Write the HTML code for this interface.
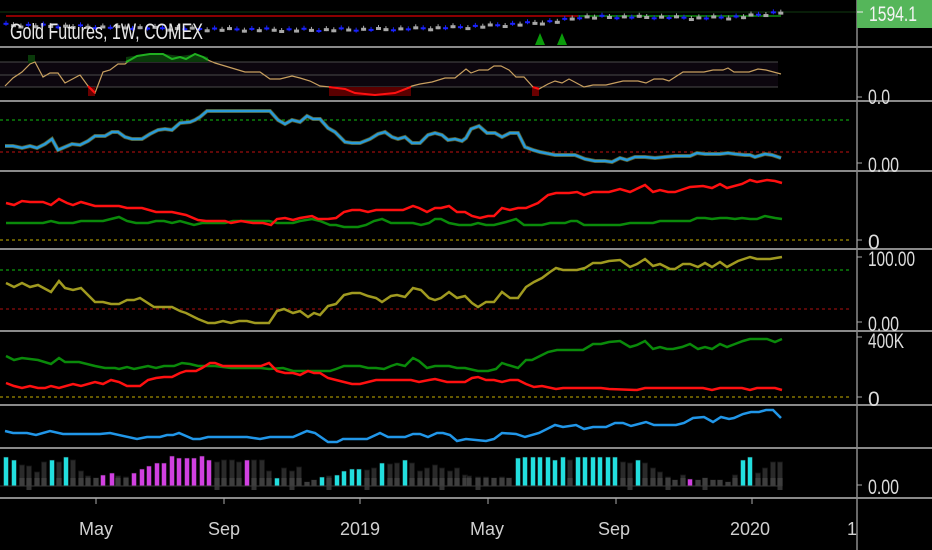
<!DOCTYPE html>
<html><head><meta charset="utf-8"><style>
html,body{margin:0;padding:0;background:#000;width:932px;height:550px;overflow:hidden}
svg{display:block}
text{font-family:"Liberation Sans",sans-serif}
</style></head><body>
<svg id="s" width="932" height="550" viewBox="0 0 932 550" xmlns="http://www.w3.org/2000/svg">
<rect width="932" height="550" fill="#000"/>
<!-- panel 1 -->
<line x1="0" y1="12" x2="857" y2="12" stroke="#0f3a0f" stroke-width="1"/>
<line x1="6" y1="16" x2="578" y2="16" stroke="#8a0000" stroke-width="2"/>
<line x1="578" y1="16" x2="781" y2="16" stroke="#0a6a0a" stroke-width="2"/>
<g id="candles"></g>
<polygon points="535,45 540,33 545,45" fill="#0a9a0a"/>
<polygon points="557,45 562,33 567,45" fill="#0a9a0a"/>
<text x="10" y="39" font-size="22" fill="#e8e8e8" textLength="193" lengthAdjust="spacingAndGlyphs">Gold Futures, 1W, COMEX</text>
<!-- panel 2 -->
<rect x="0" y="62" width="778" height="25" fill="#0c060e"/>
<line x1="0" y1="62" x2="778" y2="62" stroke="#4a4a4a"/>
<line x1="0" y1="75" x2="778" y2="75" stroke="#4a4a4a"/>
<line x1="0" y1="87" x2="778" y2="87" stroke="#4a4a4a"/>
<rect x="28" y="55" width="7" height="8" fill="#0a3a0a"/>
<polygon points="126,62 126,57 140,55 165,54 180,56 195,54 208,57 208,62" fill="#0a3a0a"/>
<rect x="88" y="87" width="7" height="9" fill="#6a0000"/>
<rect x="329" y="87" width="82" height="9" fill="#5a0000"/>
<rect x="532" y="87" width="7" height="9" fill="#6a0000"/>
<polyline fill="none" stroke="#c8a060" stroke-width="1.2" points="5,86 13,78 22,72 30,64 35,62 43,77 50,73 58,73 65,83 80,75 88,86 95,93 103,72 110,70 118,64 125,64 130,60 137,56 150,54 163,54 172,59 180,57 186,59 195,54 203,57 208,60 215,63 245,72 260,72 270,79 280,79 292,76 300,78 310,81 320,86 330,87 345,89 355,93 375,95 395,93 412,86 420,84 432,82 445,78 455,78 466,69 471,73 479,70 488,70 494,66 501,66 509,70 516,77 524,77 533,87 539,89 548,84 555,81 562,83 569,79 584,87 593,85 606,85 623,81 638,81 646,83 654,79 663,79 669,81 683,72 704,72 713,70 723,70 728,68 734,72 749,72 758,69 766,70 781,74"/>
<polyline fill="none" stroke="#20b020" stroke-width="2" points="126,62 130,60 137,56 150,54 163,54 172,59 180,57 186,59 195,54 203,57 208,60"/>
<polyline fill="none" stroke="#ff1010" stroke-width="2" points="88,86 95,93"/>
<polyline fill="none" stroke="#ff1010" stroke-width="2" points="329,87 345,89 355,93 375,95 395,93 411,87"/>
<polyline fill="none" stroke="#ff1010" stroke-width="2" points="533,87 539,89"/>
<!-- panel 3 -->
<line x1="0" y1="120" x2="850" y2="120" stroke="#10c010" stroke-dasharray="3,3"/>
<line x1="0" y1="152" x2="850" y2="152" stroke="#c01010" stroke-dasharray="3,3"/>
<polyline fill="none" stroke="#5a5a20" stroke-width="4" points="5,146 13,146 22,148 30,146 37,148 45,144 52,139 58,150 65,147 72,144 80,145 88,141 95,136 105,136 112,132 118,132 125,137 132,139 142,139 150,134 158,130 165,129 172,130 180,123 190,122 195,120 200,117 207,111 270,111 278,120 285,124 292,120 300,122 307,116 313,119 320,119 328,128 335,132 345,142 352,143 360,143 370,139 378,134 385,132 392,137 398,139 405,137 412,143 420,143 428,135 435,133 442,135 448,140 455,139 462,141 466,138 471,129 479,126 487,133 495,133 502,137 510,133 518,133 525,147 533,150 540,152 555,155 575,155 585,159 595,161 605,161 612,162 620,158 627,160 635,157 645,157 655,158 665,157 675,156 690,156 697,153 705,154 720,154 728,153 735,154 745,155 750,155 755,157 765,154 772,155 781,158"/>
<polyline fill="none" stroke="#2a9ad8" stroke-width="2.5" points="5,146 13,146 22,148 30,146 37,148 45,144 52,139 58,150 65,147 72,144 80,145 88,141 95,136 105,136 112,132 118,132 125,137 132,139 142,139 150,134 158,130 165,129 172,130 180,123 190,122 195,120 200,117 207,111 270,111 278,120 285,124 292,120 300,122 307,116 313,119 320,119 328,128 335,132 345,142 352,143 360,143 370,139 378,134 385,132 392,137 398,139 405,137 412,143 420,143 428,135 435,133 442,135 448,140 455,139 462,141 466,138 471,129 479,126 487,133 495,133 502,137 510,133 518,133 525,147 533,150 540,152 555,155 575,155 585,159 595,161 605,161 612,162 620,158 627,160 635,157 645,157 655,158 665,157 675,156 690,156 697,153 705,154 720,154 728,153 735,154 745,155 750,155 755,157 765,154 772,155 781,158"/>
<!-- panel 4 -->
<line x1="0" y1="240" x2="850" y2="240" stroke="#c8b000" stroke-dasharray="3,3"/>
<polyline fill="none" stroke="#0a8a0a" stroke-width="2.5" points="6,223 43,223 51,221 59,223 73,223 81,221 103,221 119,217 127,221 136,223 148,223 156,221 164,221 172,223 180,221 194,225 202,223 225,223 233,221 269,221 277,223 293,223 300,221 312,219 320,221 330,225 336,225 344,227 358,227 366,225 374,221 382,219 391,223 413,223 421,225 429,223 435,219 441,219 449,223 459,225 471,225 478,223 486,225 494,225 506,222 516,219 524,225 542,225 550,223 565,223 571,221 577,221 584,225 620,225 630,223 653,223 660,221 690,221 697,218 705,218 712,219 720,218 727,218 735,219 742,218 750,219 757,219 765,216 775,218 782,219"/>
<polyline fill="none" stroke="#ff1010" stroke-width="2.5" points="6,203 14,205 22,201 30,202 43,202 51,205 59,199 67,203 73,205 81,202 95,206 119,206 127,208 142,208 156,212 172,212 186,215 198,220 206,221 225,221 231,223 241,221 253,223 263,223 271,225 277,219 285,218 293,220 300,218 312,216 318,219 328,219 336,218 344,212 352,210 360,210 368,212 376,210 403,210 413,206 419,208 427,212 435,208 441,208 449,206 457,212 465,212 472,216 480,218 488,216 494,216 502,208 510,210 518,208 526,208 538,203 548,195 556,193 569,193 577,192 584,195 593,192 609,192 620,189 630,192 645,185 653,192 660,190 668,192 675,192 690,187 703,186 712,188 720,184 727,188 742,184 750,180 757,182 767,180 775,181 782,183"/>
<!-- panel 5 -->
<line x1="0" y1="270" x2="850" y2="270" stroke="#10c010" stroke-dasharray="3,3"/>
<line x1="0" y1="309" x2="850" y2="309" stroke="#b01010" stroke-dasharray="3,3"/>
<polyline fill="none" stroke="#a09a20" stroke-width="2.5" points="6,283 14,287 22,283 30,287 38,285 51,292 59,281 65,288 73,290 81,288 95,302 103,302 111,304 119,304 127,300 134,300 140,298 154,307 172,307 180,311 186,313 198,319 208,323 215,323 223,321 231,323 239,321 247,321 255,323 269,323 277,311 284,309 293,313 300,311 308,317 314,313 320,315 328,306 336,304 344,295 352,293 360,293 368,296 376,298 382,302 391,296 397,295 405,297 413,288 421,290 429,298 435,300 441,298 449,292 457,298 465,296 472,303 478,307 486,302 494,302 502,292 510,298 518,298 526,287 534,282 542,278 550,272 556,268 563,270 577,270 585,268 593,263 601,263 609,261 620,260 630,267 637,264 645,259 653,266 660,264 670,269 675,269 683,264 690,264 698,267 705,263 712,267 720,262 727,267 738,261 750,257 757,259 770,259 782,257"/>
<!-- panel 6 -->
<line x1="0" y1="397" x2="850" y2="397" stroke="#c8b000" stroke-dasharray="3,3"/>
<polyline fill="none" stroke="#0a8a0a" stroke-width="2.5" points="6,356 14,360 22,358 38,360 51,364 59,358 65,362 79,362 95,366 105,368 115,368 119,369 127,367 134,369 148,366 156,368 164,366 174,366 182,363 190,364 198,366 215,366 231,368 261,368 269,369 283,368 293,371 330,371 336,369 344,366 360,366 368,368 376,368 384,369 391,366 397,364 405,366 413,358 419,361 427,368 435,366 449,366 457,368 465,368 478,371 488,371 496,369 502,363 508,365 518,368 526,360 532,360 540,356 548,352 557,350 583,350 593,344 601,344 609,342 620,341 630,347 637,345 645,341 653,349 660,347 667,349 673,349 682,347 690,344 698,349 705,347 712,349 720,344 727,347 735,344 743,341 750,339 767,339 775,342 782,339"/>
<polyline fill="none" stroke="#ff1010" stroke-width="2.5" points="6,383 14,386 22,388 30,386 38,388 45,388 51,386 59,388 73,384 81,386 95,382 103,384 111,380 119,382 127,386 140,386 148,380 156,378 164,377 172,377 180,373 186,371 196,371 202,368 210,363 215,363 223,366 261,366 269,363 277,371 285,373 293,373 300,375 308,371 314,373 320,373 328,378 336,380 344,382 352,384 360,384 368,382 376,380 411,380 419,382 429,380 435,379 447,382 465,382 472,378 478,377 486,380 494,380 502,382 510,380 518,380 526,384 534,387 542,386 556,389 563,388 601,388 609,389 637,390 645,388 703,388 712,390 720,388 742,388 750,390 757,388 775,388 782,390"/>
<!-- panel 7 -->
<polyline fill="none" stroke="#2196e8" stroke-width="2.5" points="5,431 13,433 27,433 36,435 50,431 63,434 100,434 110,433 137,439 147,437 160,437 167,435 173,435 179,433 193,439 200,439 208,437 247,437 260,439 270,437 293,437 307,431 315,433 328,442 337,442 343,439 367,439 380,433 388,437 405,437 413,434 420,434 428,437 437,433 443,433 450,435 457,441 466,439 486,441 494,439 502,433 516,434 525,437 539,433 555,425 563,427 576,425 584,429 593,427 606,427 615,423 623,423 631,426 646,422 654,425 676,425 684,423 693,418 704,417 713,422 721,417 729,419 734,418 743,414 751,412 759,412 766,410 773,410 781,418"/>
<!-- panel 8 -->
<g id="hist"></g>
<line x1="0" y1="486" x2="782" y2="486" stroke="#3a3a3a" stroke-width="1"/>
<!-- dividers -->
<g stroke="#8a8a8a" stroke-width="2">
<line x1="0" y1="47" x2="932" y2="47"/>
<line x1="0" y1="101" x2="932" y2="101"/>
<line x1="0" y1="171" x2="932" y2="171"/>
<line x1="0" y1="249" x2="932" y2="249"/>
<line x1="0" y1="331" x2="932" y2="331"/>
<line x1="0" y1="405" x2="932" y2="405"/>
<line x1="0" y1="448" x2="932" y2="448"/>
<line x1="0" y1="498" x2="932" y2="498"/>
</g>
<line x1="857" y1="0" x2="857" y2="550" stroke="#8a8a8a" stroke-width="1.5"/>
<!-- price box -->
<rect x="857" y="0" width="75" height="28" fill="#55b65a"/>
<line x1="857" y1="12" x2="863" y2="12" stroke="#eee"/>
<text x="869" y="21" font-size="21" fill="#f4f4f4" textLength="48" lengthAdjust="spacingAndGlyphs">1594.1</text>
<!-- axis labels -->
<g fill="#dcdcdc" font-size="21">
<text x="868" y="104" textLength="22" lengthAdjust="spacingAndGlyphs">0.0</text>
<text x="868" y="172" textLength="31" lengthAdjust="spacingAndGlyphs">0.00</text>
<text x="868" y="249">0</text>
<text x="868" y="266" textLength="47" lengthAdjust="spacingAndGlyphs">100.00</text>
<text x="868" y="331" textLength="31" lengthAdjust="spacingAndGlyphs">0.00</text>
<text x="868" y="348" textLength="36" lengthAdjust="spacingAndGlyphs">400K</text>
<text x="868" y="406">0</text>
<text x="868" y="494" textLength="31" lengthAdjust="spacingAndGlyphs">0.00</text>
</g>
<g stroke="#aaa" stroke-width="1">
<line x1="857" y1="97" x2="862" y2="97"/><line x1="857" y1="163" x2="862" y2="163"/>
<line x1="857" y1="240" x2="862" y2="240"/><line x1="857" y1="257" x2="862" y2="257"/>
<line x1="857" y1="322" x2="862" y2="322"/><line x1="857" y1="337" x2="862" y2="337"/>
<line x1="857" y1="397" x2="862" y2="397"/><line x1="857" y1="485" x2="862" y2="485"/>
<line x1="96" y1="498" x2="96" y2="504"/><line x1="224" y1="498" x2="224" y2="504"/>
<line x1="360" y1="498" x2="360" y2="504"/><line x1="488" y1="498" x2="488" y2="504"/>
<line x1="616" y1="498" x2="616" y2="504"/><line x1="752" y1="498" x2="752" y2="504"/>
</g>
<g fill="#d0d0d0" font-size="18" text-anchor="middle">
<text x="96" y="535">May</text>
<text x="224" y="535">Sep</text>
<text x="360" y="535">2019</text>
<text x="487" y="535">May</text>
<text x="614" y="535">Sep</text>
<text x="750" y="535">2020</text>
<text x="852" y="535">1</text>
</g>
</svg>
<script>
(function(){
var ns="http://www.w3.org/2000/svg";
function el(t,a,p){var e=document.createElementNS(ns,t);for(var k in a)e.setAttribute(k,a[k]);p.appendChild(e);return e;}
var h=document.getElementById('hist');
var C='#22dede',M='#d040e0',G='g';
var L=[[6,457,C],[14,460,C],[22,465,G],[29,466,G],[37,472,G],[44,462,G],[52,460,C],[59,462,G],[66,457,C],[73,460,G],[81,471,G],[88,476,G],[96,478,G],[103,475,M],[112,473,M],[118,476,G],[126,477,G],[134,473,M],[142,469,M],[149,466,M],[157,463,M],[164,463,M],[172,456,M],[179,458,M],[187,458,M],[194,458,M],[202,456,M],[209,460,M],[217,462,G],[224,460,G],[232,460,G],[239,462,G],[247,460,M],[254,460,G],[262,460,G],[269,471,G],[277,478,C],[284,468,G],[292,471,G],[299,467,G],[307,482,G],[314,480,G],[322,477,C],[329,476,G],[337,475,C],[344,471,C],[352,469,C],[359,469,C],[367,470,G],[374,468,G],[382,463,C],[390,464,G],[397,463,G],[405,460,C],[412,463,G],[420,471,G],[427,468,G],[435,465,G],[442,468,G],[450,471,G],[457,468,G],[465,475,G],
[469,476,G],[478,477,G],[486,477,G],[494,478,G],[502,477,G],[509,478,G],[518,458,C],[525,457,C],[533,457,C],[540,457,C],[548,457,C],[555,460,C],[563,457,C],[570,460,G],[578,457,C],[585,457,C],[593,457,C],[600,457,C],[608,457,C],[615,457,C],[623,462,G],[630,463,G],[638,460,C],[645,463,G],[653,468,G],[660,472,G],[668,477,G],[675,480,G],[683,475,G],[690,479,M],[698,480,G],[705,478,G],[713,480,G],[720,480,G],[728,482,G],[735,475,G],[743,460,C],[750,457,C],[758,473,G],[765,468,G],[773,462,G],[780,462,G]];
L.forEach(function(b,i){
 var x=b[0]-2.5,t=b[1];
 if(b[2]==G){
  el('rect',{x:x,y:t,width:5,height:486-t,fill:'#2a2a2a',stroke:'#141414','stroke-width':0.8},h);
  el('rect',{x:x,y:Math.max(t,478),width:5,height:486-Math.max(t,478),fill:'#3e3e3e'},h);
  if(i%5==3) el('rect',{x:x,y:486,width:5,height:4,fill:'#333'},h);
 } else el('rect',{x:x,y:t,width:5,height:486-t,fill:b[2],stroke:'#111','stroke-width':0.6},h);
});
var g=document.getElementById('candles');
var P=[[6,24],[100,26],[200,28],[300,29],[400,28],[466,26],[520,23],[560,20],[580,16],[650,16],[700,17],[740,16],[781,11]];
function yi(x){for(var i=0;i<P.length-1;i++){if(x>=P[i][0]&&x<=P[i+1][0]){var f=(x-P[i][0])/(P[i+1][0]-P[i][0]);return P[i][1]+f*(P[i+1][1]-P[i][1]);}}return 11;}
var k=0;
for(var x=6;x<=782;x+=7.45){
 var y=yi(x)+((k*7)%5-2)*0.6;
 var blue=((k*3)%7)<3;
 var c=blue?'#1a22ff':'#a8a8a8';
 el('line',{x1:x,y1:y-2,x2:x,y2:y+3,stroke:c,'stroke-width':1},g);
 el('rect',{x:x-2.5,y:y,width:5,height:blue?2:3,fill:c},g);
 k++;
}
})();
</script>
</body></html>
